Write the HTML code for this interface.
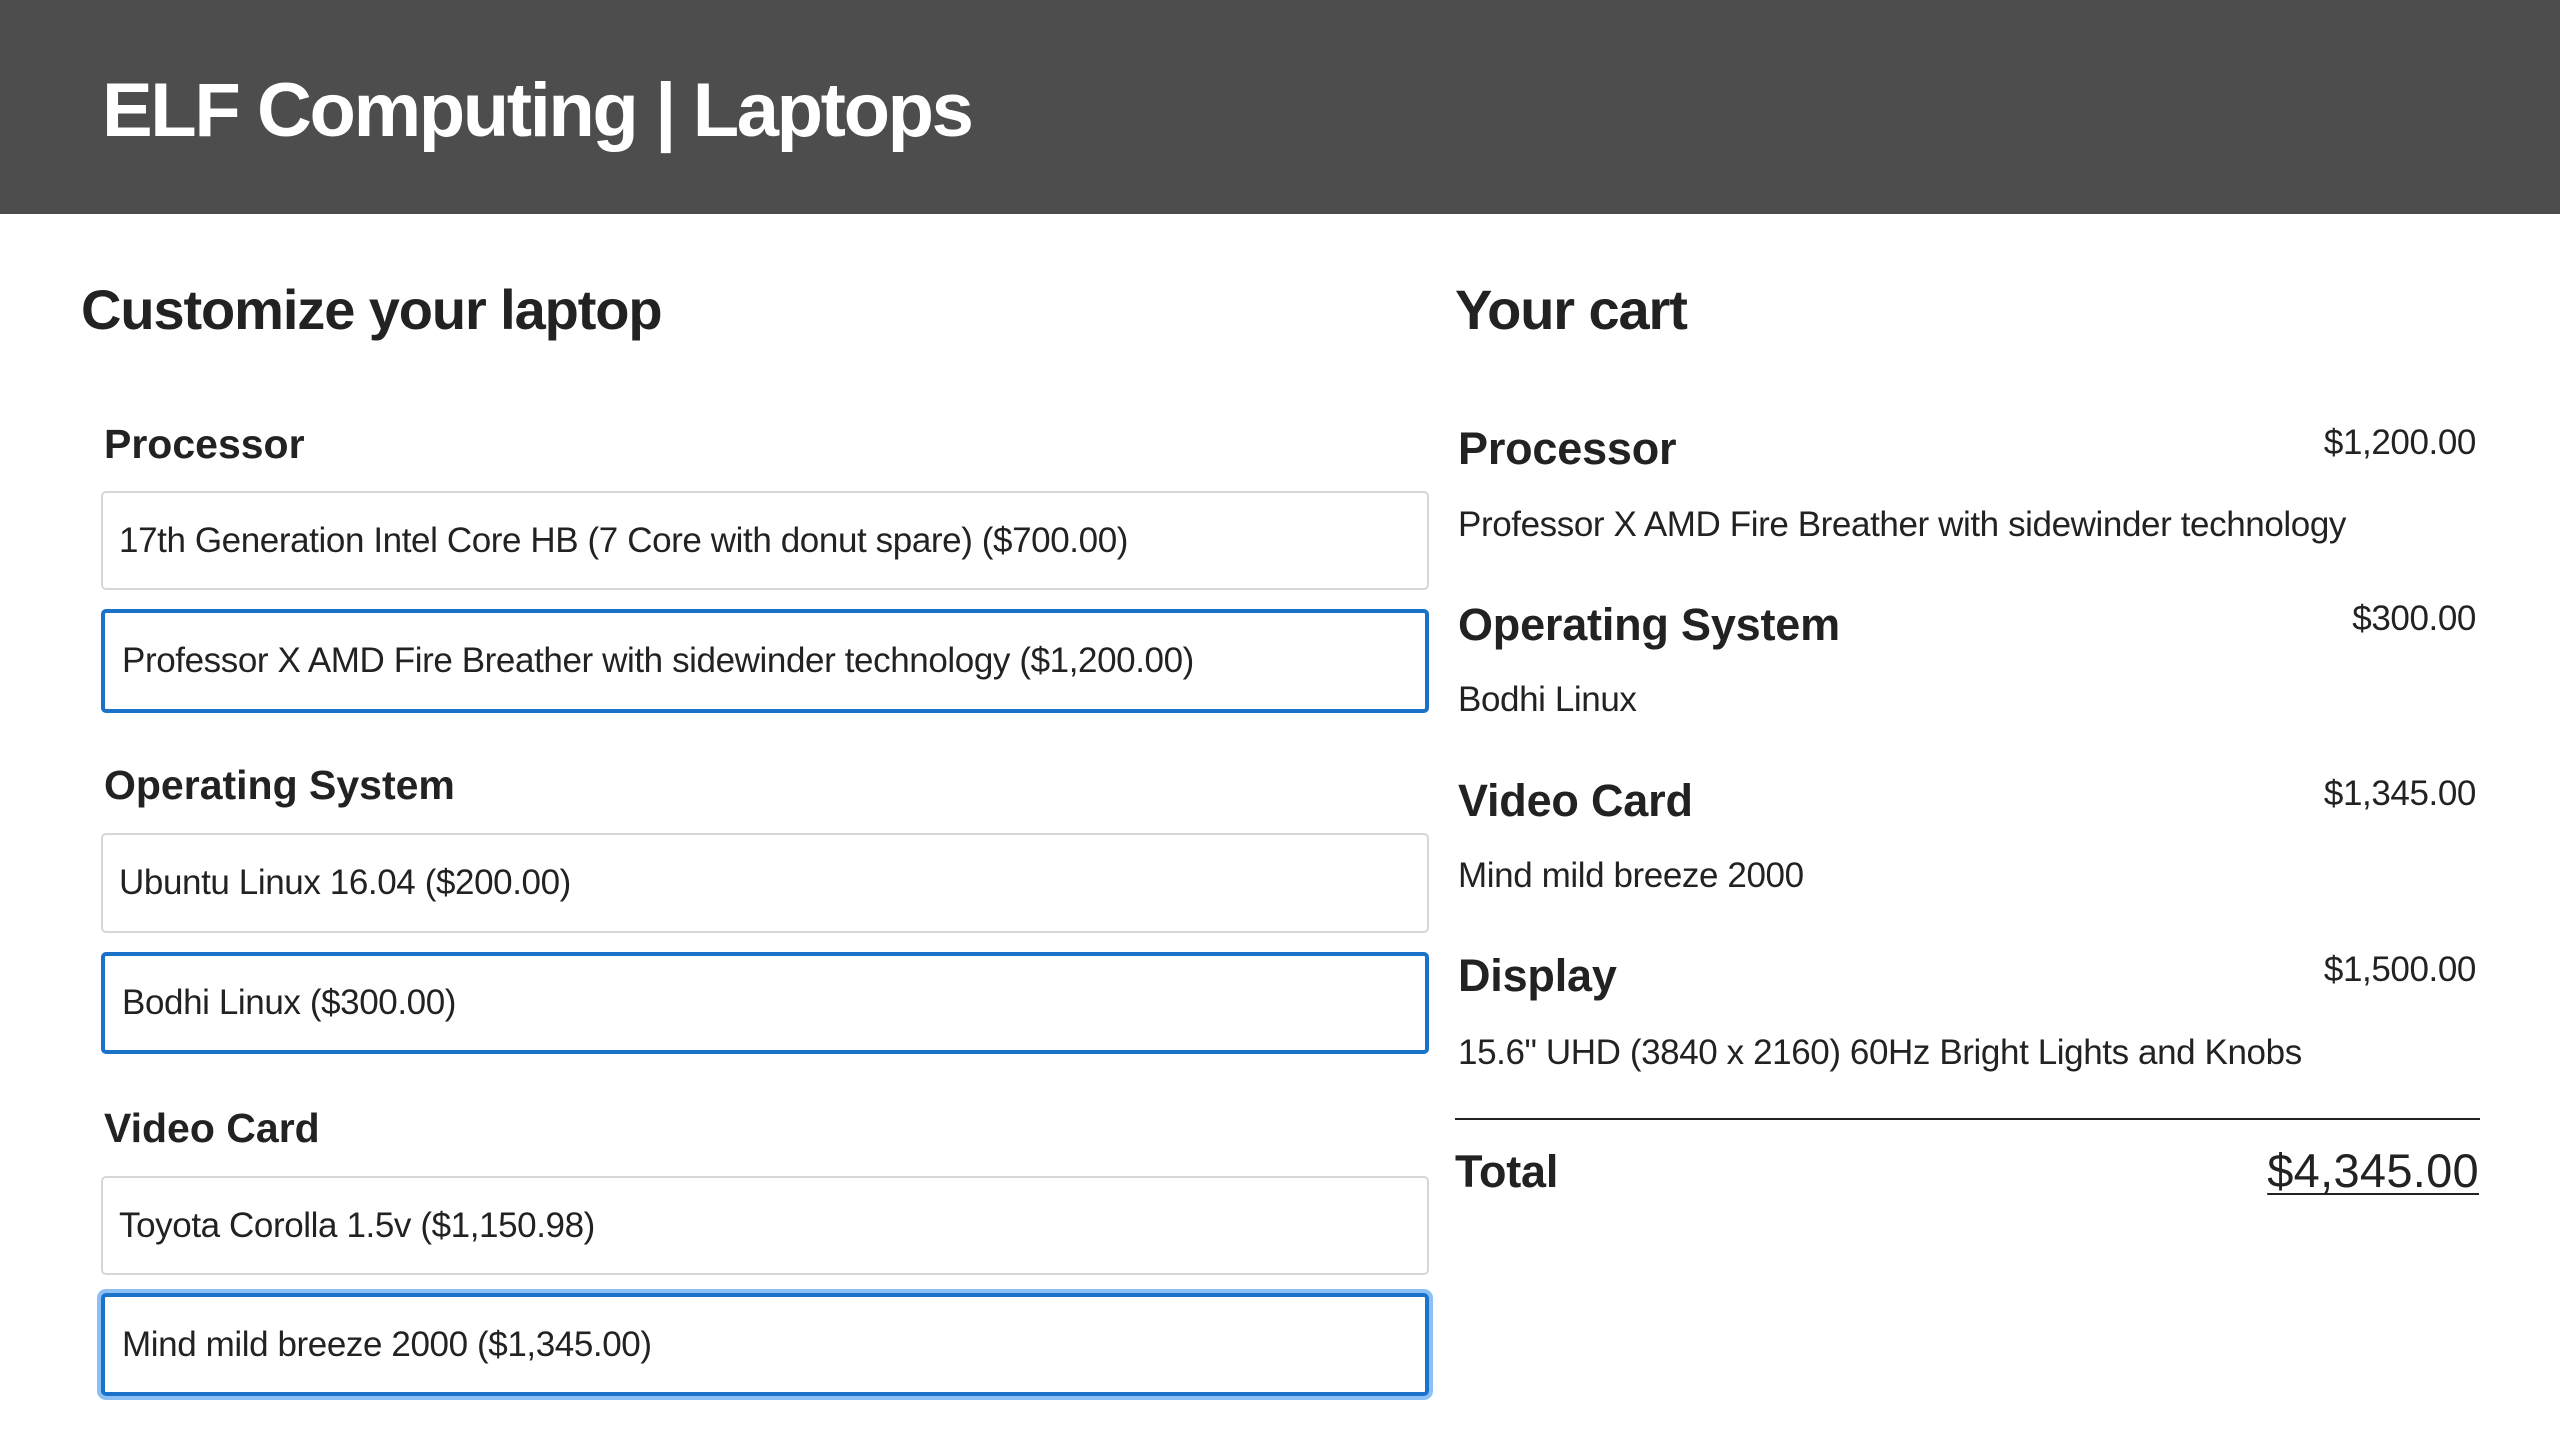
<!DOCTYPE html>
<html><head><style>
*{margin:0;padding:0;box-sizing:border-box}
body{width:2560px;height:1442px;background:#fff;font-family:"Liberation Sans",sans-serif;color:#222;position:relative;overflow:hidden}
.hdr{position:absolute;left:0;top:0;width:2560px;height:214px;background:#4d4d4d}
.a{position:absolute;line-height:1;white-space:nowrap}
.t{color:#fff;font-weight:bold;font-size:76px;left:102px;top:73px;letter-spacing:-2.4px}
.h2{font-weight:bold;font-size:56px;letter-spacing:-1.1px}
.lab{font-weight:bold;font-size:41px;left:104px;letter-spacing:0px}
.box{position:absolute;left:101px;width:1328px;border:2px solid #d6d6d6;border-radius:5px;display:flex;align-items:center;padding-left:16px;font-size:35px;letter-spacing:-0.4px}
.sel{border:4px solid #1a73c8;padding-left:17px}
.focus{box-shadow:0 0 0 4px #8cc0f5}
.cl{font-weight:bold;font-size:45px;left:1458px;letter-spacing:-0.2px}
.pr{font-size:35px;right:84px;letter-spacing:-0.4px}
.ds{font-size:35px;left:1458px;letter-spacing:-0.4px}
</style></head><body>
<div class="hdr"></div>
<div class="a t">ELF Computing | Laptops</div>
<div class="a h2" style="left:81px;top:282px">Customize your laptop</div>
<div class="a h2" style="left:1455px;top:282px">Your cart</div>

<div class="a lab" style="top:424px">Processor</div>
<div class="box" style="top:491px;height:99px">17th Generation Intel Core HB (7 Core with donut spare) ($700.00)</div>
<div class="box sel" style="top:609px;height:104px">Professor X AMD Fire Breather with sidewinder technology ($1,200.00)</div>

<div class="a lab" style="top:765px">Operating System</div>
<div class="box" style="top:833px;height:100px">Ubuntu Linux 16.04 ($200.00)</div>
<div class="box sel" style="top:952px;height:102px">Bodhi Linux ($300.00)</div>

<div class="a lab" style="top:1108px">Video Card</div>
<div class="box" style="top:1176px;height:99px">Toyota Corolla 1.5v ($1,150.98)</div>
<div class="box sel focus" style="top:1293px;height:103px">Mind mild breeze 2000 ($1,345.00)</div>

<div class="a cl" style="top:426px">Processor</div>
<div class="a pr" style="top:425px">$1,200.00</div>
<div class="a ds" style="top:507px">Professor X AMD Fire Breather with sidewinder technology</div>

<div class="a cl" style="top:602px">Operating System</div>
<div class="a pr" style="top:601px">$300.00</div>
<div class="a ds" style="top:682px">Bodhi Linux</div>

<div class="a cl" style="top:778px">Video Card</div>
<div class="a pr" style="top:776px">$1,345.00</div>
<div class="a ds" style="top:858px">Mind mild breeze 2000</div>

<div class="a cl" style="top:953px">Display</div>
<div class="a pr" style="top:952px">$1,500.00</div>
<div class="a ds" style="top:1035px">15.6" UHD (3840 x 2160) 60Hz Bright Lights and Knobs</div>

<div style="position:absolute;left:1455px;top:1118px;width:1025px;height:2px;background:#222"></div>
<div class="a cl" style="left:1455px;top:1149px">Total</div>
<div class="a" style="right:81px;top:1147px;font-size:47px;letter-spacing:0.3px;text-decoration:underline;text-decoration-thickness:2px;text-underline-offset:6px">$4,345.00</div>
</body></html>
